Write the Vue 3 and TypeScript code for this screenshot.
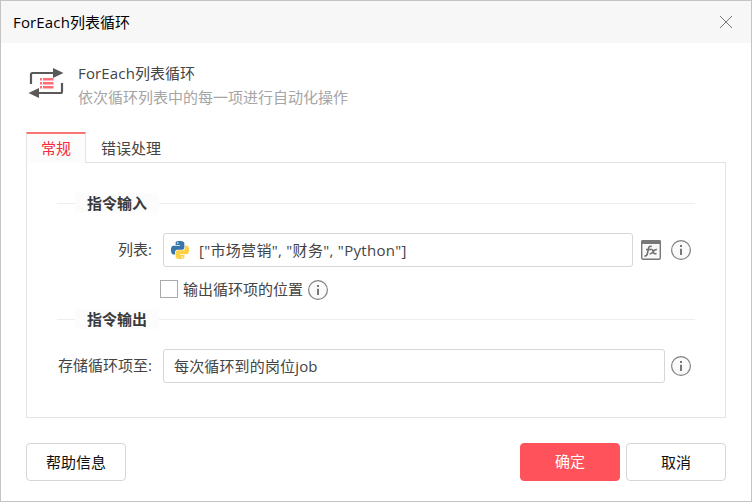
<script setup lang="ts">
import { ref } from 'vue'

const tabs: string[] = ['常规', '错误处理']
const activeTab = ref<number>(0)
const listValue = ref<string>('["市场营销", "财务", "Python"]')
const outputName = ref<string>('每次循环到的岗位job')
const outputIndex = ref<boolean>(false)
</script>

<template>
  <div class="dialog">
    <header class="titlebar">
      <span><span class="latin">ForEach</span>列表循环</span>
      <svg class="close" viewBox="0 0 12 12"><path d="M0 0L12 12M12 0L0 12" /></svg>
    </header>

    <section class="intro">
      <svg class="loop" viewBox="0 0 36 32">
        <path class="stroke" d="M3 16V6.500Q3 5 4.500 5H26M34 15V23.500Q34 25 32.500 25H9" />
        <path class="arrow" d="M25 0L35.500 5L25 10ZM11 20L.5 25L11 30Z" />
        <path class="items" d="M12 10h2v2.400h-2zM15 10h10.500v2.400H15zM12 14h2v2.400h-2zM15 14h10.500v2.400H15zM12 18h2v2.400h-2zM15 18h10.500v2.400H15z" />
      </svg>
      <div class="intro-text">
        <div class="name"><span class="latin">ForEach</span>列表循环</div>
        <div class="desc">依次循环列表中的每一项进行自动化操作</div>
      </div>
    </section>

    <nav class="tabs">
      <div v-for="(tab, i) in tabs" :key="tab" class="tab" :class="{ active: i === activeTab }" @click="activeTab = i">{{ tab }}</div>
    </nav>

    <main class="panel">
      <div class="legend"><span>指令输入</span></div>
      <div class="row">
        <label class="label">列表:</label>
        <div class="field">
          <svg class="python" viewBox="0 0 24 24">
            <path class="py-blue" d="M14.250.180l.9.200.730.260.590.300.450.320.340.340.250.340.160.330.100.300.040.260.020.200-.010.130V8.500l-.050.630-.130.550-.210.460-.260.380-.300.310-.330.250-.350.190-.350.140-.330.100-.300.070-.260.040-.210.020H8.770l-.690.050-.590.140-.500.220-.410.270-.330.320-.270.350-.200.360-.150.370-.100.350-.070.320-.040.270-.020.210v3.060H3.170l-.210-.030-.280-.070-.320-.120-.350-.180-.360-.260-.360-.360-.350-.460-.320-.590-.280-.730-.210-.880-.140-1.050-.050-1.230.060-1.220.160-1.040.240-.870.320-.710.360-.570.400-.440.420-.330.420-.240.400-.160.360-.100.320-.050.240-.010h.160l.060.010h8.160v-.830H6.180l-.010-2.750-.020-.370.050-.340.110-.310.170-.280.250-.260.310-.230.380-.200.440-.180.510-.150.580-.120.640-.100.710-.060.770-.040.840-.020 1.270.050zM7.950 2.650a1.100 1.100 0 1 0 2.200 0a1.100 1.100 0 1 0-2.200 0z" fill-rule="evenodd" />
            <path class="py-yellow" transform="rotate(180 12 12)" d="M14.250.180l.9.200.730.260.590.300.450.320.340.340.250.340.160.330.100.300.040.260.020.200-.010.130V8.500l-.050.630-.130.550-.210.460-.260.380-.300.310-.330.250-.350.190-.350.140-.330.100-.300.070-.260.040-.210.020H8.770l-.690.050-.590.140-.500.220-.410.270-.330.320-.270.350-.200.360-.150.370-.100.350-.070.320-.040.270-.020.210v3.060H3.170l-.210-.030-.280-.070-.320-.120-.350-.180-.360-.260-.360-.360-.350-.460-.320-.590-.280-.730-.210-.880-.140-1.050-.050-1.230.060-1.220.160-1.040.240-.870.320-.710.360-.570.400-.440.420-.330.420-.240.400-.160.360-.100.320-.050.240-.010h.160l.060.010h8.160v-.830H6.180l-.010-2.750-.020-.370.050-.340.110-.310.170-.280.250-.260.310-.230.380-.200.440-.180.510-.150.580-.120.640-.100.710-.060.770-.040.840-.020 1.270.050zM7.950 2.650a1.100 1.100 0 1 0 2.200 0a1.100 1.100 0 1 0-2.200 0z" fill-rule="evenodd" />
          </svg>
          <span class="code">{{ listValue }}</span>
        </div>
        <svg class="icon fx" viewBox="0 0 20 20">
          <rect x=".7" y=".7" width="18.600" height="18.600" rx="1.500" />
          <path class="fx-bar" d="M0 4V1.500Q0 0 1.500 0H18.500Q20 0 20 1.500V4Z" />
          <path class="fx-glyph" d="M3.500 15.700C5.300 16.500 6 15.200 6.500 13L7.600 8.200C8 6.300 8.900 5.800 10.800 6.500M5 9.500H10M9.600 9.600C11.600 9 11.800 10 12.300 11.700C12.800 13.600 13.300 14.200 15.500 13.400M16 9.500C13.800 9.200 13 10.500 12.200 11.700C11.300 13.200 10.500 14.200 8.600 13.700" />
        </svg>
        <svg class="icon info" viewBox="0 0 20 20">
          <circle cx="10" cy="10" r="9.400" />
          <path d="M9 5h2v2H9zM9 8.700h2V15H9z" />
        </svg>
      </div>
      <div class="check-row">
        <span class="checkbox" role="checkbox" :aria-checked="outputIndex" @click="outputIndex = !outputIndex"></span>
        <span class="check-label">输出循环项的位置</span>
        <svg class="icon info low" viewBox="0 0 20 20">
          <circle cx="10" cy="10" r="9.400" />
          <path d="M9 5h2v2H9zM9 8.700h2V15H9z" />
        </svg>
      </div>
      <div class="legend"><span>指令输出</span></div>
      <div class="row">
        <label class="label">存储循环项至:</label>
        <div class="field output"><span class="latin">{{ outputName }}</span></div>
        <svg class="icon info near" viewBox="0 0 20 20">
          <circle cx="10" cy="10" r="9.400" />
          <path d="M9 5h2v2H9zM9 8.700h2V15H9z" />
        </svg>
      </div>
    </main>

    <footer class="footer">
      <button class="btn help">帮助信息</button>
      <button class="btn primary">确定</button>
      <button class="btn">取消</button>
    </footer>
  </div>
</template>

<style>
body {
  margin: 0;
}
</style>

<style scoped>
.dialog {
  box-sizing: border-box;
  width: 752px;
  height: 502px;
  border: 1px solid #c4c4c4;
  background: #fff;
  color: #444;
  font: 15px/20px "Open Sans", "Noto Sans CJK SC", sans-serif;
  white-space: nowrap;
  overflow: hidden;
}
.dialog * {
  box-sizing: border-box;
}
.latin {
  letter-spacing: 0.15px;
}
.titlebar {
  display: flex;
  align-items: center;
  justify-content: space-between;
  height: 42px;
  padding: 0 19px 0 12px;
  background: #f7f7f7;
  color: #000;
}
.close {
  width: 12px;
  height: 12px;
  overflow: visible;
  stroke: #777;
  stroke-width: 1;
}
.intro {
  display: flex;
  height: 89px;
  padding: 20px 0 0 27px;
}
.loop {
  width: 36px;
  height: 32px;
  margin-top: 5px;
}
.stroke {
  fill: none;
  stroke: #595959;
  stroke-width: 2.2;
}
.arrow {
  fill: #595959;
}
.items {
  fill: #ff7075;
}
.intro-text {
  padding-left: 14px;
  line-height: 24px;
  margin-top: -2px;
}
.desc {
  color: #a5a5a5;
}
.tabs {
  display: flex;
  height: 31px;
  margin: 0 25px;
}
.tab {
  height: 30px;
  padding: 6px 15px 0;
  border-top: 0;
}
.tab.active {
  position: relative;
  width: 60px;
  height: 31px;
  padding: 4px 0 0;
  border: 1px solid #e3e3e3;
  border-top: 2px solid #f87575;
  border-bottom: 0;
  background: #fcfcfc;
  color: #f5283c;
  text-align: center;
}
.panel {
  height: 256px;
  margin: -1px 25px 0;
  padding: 30px 30px 0;
  border: 1px solid #e3e3e3;
}
.legend {
  display: flex;
  align-items: center;
  height: 20px;
  color: #3a3a3a;
  font-weight: 700;
}
.legend::before,
.legend::after {
  content: "";
  height: 1px;
  background: #eee;
}
.legend::before {
  width: 18px;
}
.legend::after {
  flex: 1;
}
.legend span {
  width: 84px;
  background: #fcfcfc;
  text-align: center;
}
.row {
  display: flex;
  align-items: center;
  height: 34px;
  margin: 20px 0 0;
}
.label {
  width: 96px;
  padding: 0 1px 2px 0;
  text-align: right;
}
.field {
  display: flex;
  align-items: center;
  width: 470px;
  height: 34px;
  margin-left: 10px;
  padding: 0 7px;
  border: 1px solid #d6d6d6;
  border-radius: 3px;
}
.field.output {
  width: 502px;
  padding: 0 10px;
}
.code {
  letter-spacing: 0.3px;
}
.python {
  width: 18px;
  height: 18px;
  margin-right: 10px;
}
.py-blue {
  fill: #3875a8;
}
.py-yellow {
  fill: #ffd146;
}
.icon {
  flex: none;
  width: 20px;
  height: 20px;
}
.fx {
  margin: 0 10px 0 8px;
}
.near {
  margin-left: 6px;
}
.fx rect {
  fill: #f8f8f8;
  stroke: #777;
  stroke-width: 1.4;
}
.fx-bar {
  fill: #777;
}
.fx-glyph {
  fill: none;
  stroke: #707070;
  stroke-width: 1.6;
}
.info circle {
  fill: #fafafa;
  stroke: #808080;
  stroke-width: 1.2;
}
.info path {
  fill: #777;
}
.check-row {
  display: flex;
  align-items: center;
  height: 20px;
  margin: 12px 0 20px 103px;
}
.check-row + .legend {
  margin-top: -10px;
}
.checkbox {
  width: 18px;
  height: 18px;
  margin-right: 5px;
  border: 1px solid #aaa;
}
.check-label {
  margin-right: 5px;
}
.low {
  margin-top: 2px;
}
.footer {
  display: flex;
  gap: 6px;
  margin: 25px 25px 0;
}
.btn {
  width: 100px;
  height: 38px;
  padding: 0;
  border: 1px solid #d6d6d6;
  border-radius: 4px;
  background: #fff;
  color: #111;
  font: inherit;
}
.help {
  margin-right: auto;
}
.primary {
  padding-bottom: 2px;
  border-color: #ff525b;
  background: #ff525b;
  color: #fff;
}
</style>
